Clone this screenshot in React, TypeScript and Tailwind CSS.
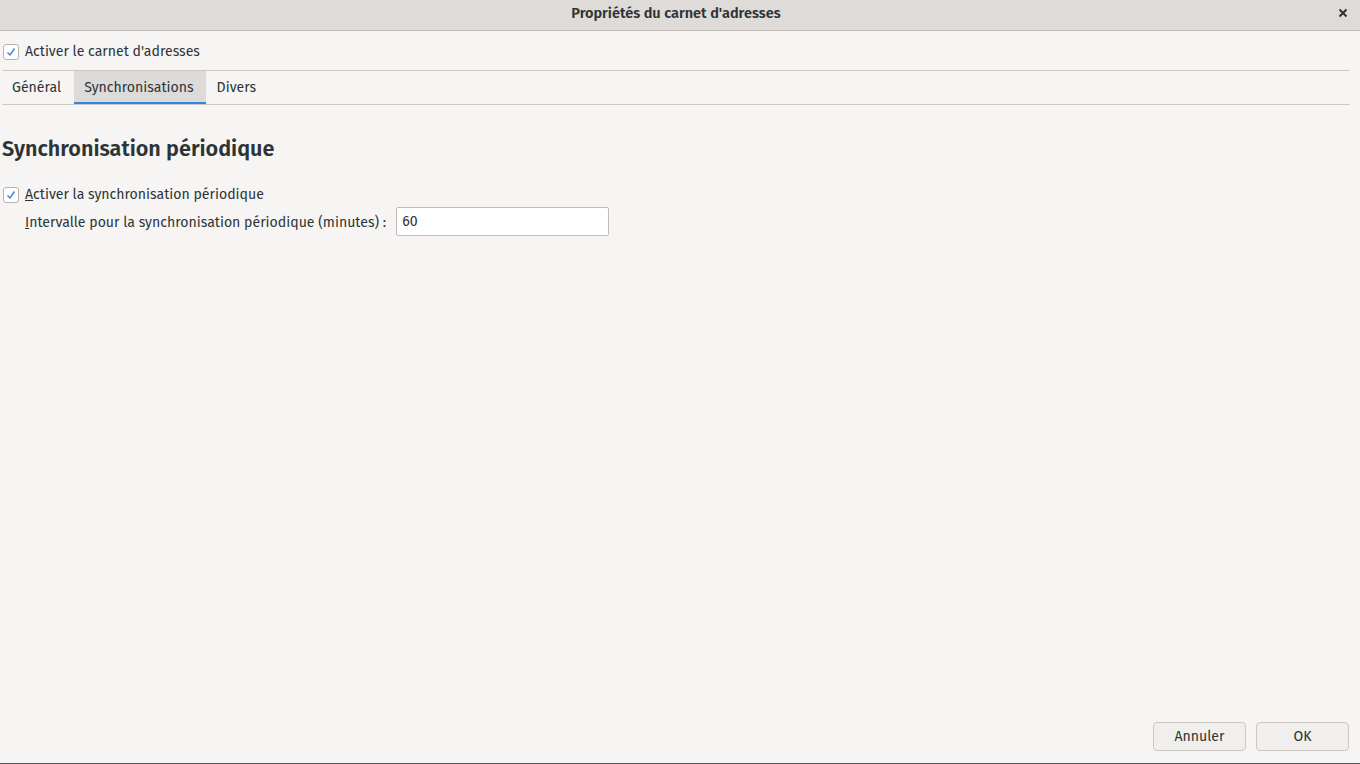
import React from "react";

function Check() {
  return (
    <span className="flex h-[16px] w-[16px] items-center justify-center rounded-[3px] border border-[#b6b3ae] bg-white">
      <svg width="12" height="12" viewBox="0 0 12 12">
        <path d="M2.5 6.5 L5 9 L9.5 2.5" fill="none" stroke="#3584e4" strokeWidth="1.4" />
      </svg>
    </span>
  );
}

export default function App() {
  const font = { fontFamily: '"Fira Sans", "Open Sans", "Noto Sans", sans-serif' };
  return (
    <div className="flex h-[764px] w-[1360px] flex-col overflow-hidden bg-[#f6f5f4] text-[14.1px] text-[#2e3436]" style={font}>
      <div className="relative flex h-[31px] shrink-0 items-center justify-center border-b border-[#bfbcb8] bg-[#dedbd8] pb-[2px] pr-[8px]">
        <span className="font-semibold text-[14.5px] text-[#2e3436]">Propriétés du carnet d'adresses</span>
        <svg className="absolute right-[12px] top-[8px]" width="10" height="10" viewBox="0 0 10 10">
          <path d="M1.5 1.5 L8.5 8.5 M8.5 1.5 L1.5 8.5" stroke="#2e3436" strokeWidth="2" />
        </svg>
      </div>
      <div className="flex h-[39px] items-center gap-[6px] pl-[3px] pt-[2px]">
        <Check />
        <span>Activer le carnet d'adresses</span>
      </div>
      <div className="ml-[2px] mr-[10px] flex h-[35px] border-y border-[#cdc9c5]">
        <div className="flex items-center pl-[10px] pr-[13px]">Général</div>
        <div className="flex items-center border-b-[2px] border-[#3584e4] bg-[#dcdbda] pl-[10px] pr-[12px] pt-[2px]">Synchronisations</div>
        <div className="flex items-center px-[11px]">Divers</div>
      </div>
      <div className="flex flex-1 flex-col px-[2px]">
        <h1 className="mt-[28px] text-[21.6px] font-semibold leading-[32px] text-[#2e3436]">Synchronisation périodique</h1>
        <div className="mt-[19px] flex items-center gap-[6px] pl-[1px]">
          <Check />
          <span><span className="underline">A</span>ctiver la synchronisation périodique</span>
        </div>
        <div className="mt-[2px] flex items-center gap-[10px] pl-[23px]">
          <span className="pt-[2px]"><span className="underline">I</span>ntervalle pour la synchronisation périodique (minutes) :</span>
          <div className="flex h-[29px] w-[213px] items-center rounded-[2px] border border-[#c0bdb9] bg-white px-[5px]">60</div>
        </div>
        <div className="flex-1" />
        <div className="mb-[12px] flex justify-end gap-[10px] pr-[9px]">
          <button className="h-[29px] w-[93px] rounded-[4px] border border-[#cdc7c2] bg-[#f0efee]">Annuler</button>
          <button className="h-[29px] w-[93px] rounded-[4px] border border-[#cdc7c2] bg-[#f0efee]">OK</button>
        </div>
      </div>
      <div className="h-[1px] bg-[#555]" />
    </div>
  );
}
